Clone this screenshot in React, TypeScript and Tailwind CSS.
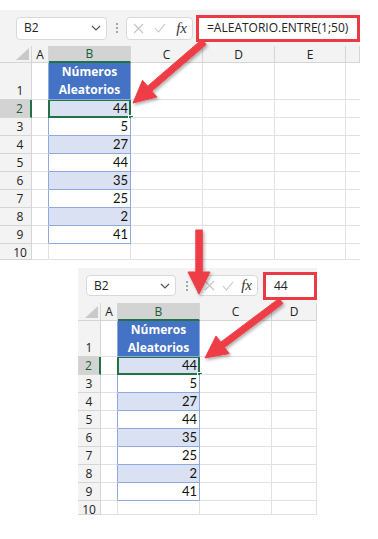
import type { ReactNode } from 'react';

type Col = { label: string; w: number };

type SheetProps = {
  width: number;
  toolbarH: number;
  nameMl: number;
  nameW: number;
  boxH: number;
  dotsW: number;
  iconW: number;
  redGap: number;
  redW: number;
  redH: number;
  formula: string;
  headerH: number;
  row1H: number;
  lastRowH: number;
  rowHeadW: number;
  rowHeadPad: number;
  cols: Col[];
};

const VALUES = [44, 5, 27, 44, 35, 25, 2, 41];

const TOP: SheetProps = {
  width: 360,
  toolbarH: 36,
  nameMl: 16,
  nameW: 91,
  boxH: 23,
  dotsW: 19,
  iconW: 67,
  redGap: 3,
  redW: 164,
  redH: 27,
  formula: '=ALEATORIO.ENTRE(1;50)',
  headerH: 17,
  row1H: 37,
  lastRowH: 16,
  rowHeadW: 32,
  rowHeadPad: 9,
  cols: [
    { label: 'A', w: 17 },
    { label: 'B', w: 82 },
    { label: 'C', w: 72 },
    { label: 'D', w: 72 },
    { label: 'E', w: 71 },
    { label: '', w: 14 },
  ],
};

const BOTTOM: SheetProps = {
  width: 239,
  toolbarH: 35,
  nameMl: 8,
  nameW: 90,
  boxH: 21,
  dotsW: 21,
  iconW: 61,
  redGap: 5,
  redW: 54,
  redH: 28,
  formula: '44',
  headerH: 18,
  row1H: 36,
  lastRowH: 14,
  rowHeadW: 23,
  rowHeadPad: 0,
  cols: [
    { label: 'A', w: 17 },
    { label: 'B', w: 82 },
    { label: 'C', w: 72 },
    { label: 'D', w: 45 },
  ],
};

function Dots() {
  return (
    <div className="flex flex-col gap-[2px]">
      <span className="h-[2px] w-[2px] rounded-full bg-[#8a8a8a]" />
      <span className="h-[2px] w-[2px] rounded-full bg-[#8a8a8a]" />
      <span className="h-[2px] w-[2px] rounded-full bg-[#8a8a8a]" />
    </div>
  );
}

function Toolbar(p: SheetProps) {
  return (
    <div
      className="flex items-center bg-[#f3f3f3]"
      style={{ height: p.toolbarH }}
    >
      <div
        className="flex shrink-0 items-center justify-between rounded-[4px] border border-[#d9d9d9] bg-white pl-[7px] pr-[5px] text-[12px] leading-[16px] text-[#222]"
        style={{ marginLeft: p.nameMl, width: p.nameW, height: p.boxH }}
      >
        <span>B2</span>
        <svg width="10" height="6" viewBox="0 0 10 6">
          <path d="M1 1 L5 5 L9 1" fill="none" stroke="#555" strokeWidth="1.2" />
        </svg>
      </div>
      <div className="flex shrink-0 justify-center" style={{ width: p.dotsW }}>
        <Dots />
      </div>
      <div
        className="flex shrink-0 items-center justify-between rounded-[4px] border border-[#d9d9d9] bg-white pl-[6px] pr-[5px]"
        style={{ width: p.iconW, height: p.boxH }}
      >
        <svg width="11" height="11" viewBox="0 0 11 11">
          <path d="M1 1 L10 10 M10 1 L1 10" stroke="#c4c4c4" strokeWidth="1.1" />
        </svg>
        <svg width="12" height="10" viewBox="0 0 12 10">
          <path d="M1 5 L4.5 9 L11 1" fill="none" stroke="#c4c4c4" strokeWidth="1.1" />
        </svg>
        <span className="font-['Liberation_Serif',serif] text-[15px] italic leading-none text-[#333]">
          fx
        </span>
      </div>
      <div
        className="flex shrink-0 items-center border-[3px] border-[#ec3a44] bg-white pl-[8px] text-[12px] leading-[16px] text-[#222]"
        style={{ marginLeft: p.redGap, width: p.redW, height: p.redH }}
      >
        {p.formula}
      </div>
    </div>
  );
}

function HeaderRow(p: SheetProps) {
  return (
    <div className="flex bg-[#f3f3f3]" style={{ height: p.headerH }}>
      <div
        className="relative shrink-0 border-b border-r border-[#d5d5d5]"
        style={{ width: p.rowHeadW }}
      >
        <svg
          className="absolute bottom-[2px] right-[2px]"
          width="13"
          height="12"
          viewBox="0 0 13 12"
        >
          <path d="M13 0 L13 12 L0 12 Z" fill="#c9c9c9" />
        </svg>
      </div>
      {p.cols.map((c) => {
        const sel = c.label === 'B';
        return (
          <div
            key={c.label + c.w}
            className={`flex shrink-0 items-center justify-center border-r text-[12px] leading-[15px] ${
              sel
                ? 'border-b-2 border-r-[#d5d5d5] border-b-[#217346] bg-[#d3d3d3] text-[#185c37]'
                : 'border-b border-[#d5d5d5] text-[#222]'
            }`}
            style={{ width: c.w }}
          >
            {c.label}
          </div>
        );
      })}
    </div>
  );
}

function Cell({
  w,
  className,
  children,
}: {
  w: number;
  className: string;
  children?: ReactNode;
}) {
  return (
    <div className={`relative shrink-0 ${className}`} style={{ width: w }}>
      {children}
    </div>
  );
}

function Grid(p: SheetProps) {
  const rows = Array.from({ length: 10 }, (_, i) => i + 1);
  return (
    <div className="font-['Open_Sans',sans-serif]">
      {rows.map((r) => {
        const last = r === 10;
        const h = r === 1 ? p.row1H : last ? p.lastRowH : 18;
        const inTable = r <= 9;
        const selRow = r === 2;
        return (
          <div key={r} className="flex overflow-hidden" style={{ height: h }}>
            <div
              className={`flex shrink-0 justify-center text-[12px] leading-[15px] ${
                last ? 'items-start pt-[1px]' : 'items-end pb-[1px]'
              } ${
                selRow
                  ? 'border-r-2 border-b border-r-[#217346] border-b-[#d5d5d5] bg-[#d3d3d3] text-[#185c37]'
                  : 'border-b border-r border-[#d5d5d5] bg-[#f3f3f3] text-[#222]'
              }`}
              style={{ width: p.rowHeadW, paddingLeft: p.rowHeadPad }}
            >
              {r}
            </div>
            {p.cols.map((c) => {
              if (c.label === 'A') {
                return (
                  <Cell
                    key="A"
                    w={c.w}
                    className={`border-b border-r border-b-[#e1e1e1] ${
                      inTable ? 'border-r-[#8ea9db]' : 'border-r-[#e1e1e1]'
                    }`}
                  />
                );
              }
              if (c.label === 'B') {
                if (r === 1) {
                  return (
                    <Cell
                      key="B"
                      w={c.w}
                      className="flex flex-col items-center justify-center border-b border-r border-[#8ea9db] bg-[#4472c4] text-[12px] font-bold leading-[18px] text-white"
                    >
                      <span>Números</span>
                      <span>Aleatorios</span>
                    </Cell>
                  );
                }
                if (inTable) {
                  const band = r % 2 === 0;
                  return (
                    <Cell
                      key="B"
                      w={c.w}
                      className={`flex items-end justify-end border-b border-r border-[#8ea9db] pb-[1px] pr-[2px] font-['Lato',sans-serif] text-[13px] leading-[15px] text-[#111] ${
                        band ? 'bg-[#d9e1f2]' : 'bg-white'
                      }`}
                    >
                      {VALUES[r - 2]}
                      {selRow ? (
                        <>
                          <div className="pointer-events-none absolute inset-[-1px] border-2 border-[#217346]" />
                          <div className="absolute bottom-[-4px] right-[-4px] h-[6px] w-[6px] border border-white bg-[#217346]" />
                        </>
                      ) : null}
                    </Cell>
                  );
                }
                return (
                  <Cell key="B" w={c.w} className="border-b border-r border-[#e1e1e1]" />
                );
              }
              return (
                <Cell
                  key={c.label + c.w}
                  w={c.w}
                  className={`border-b border-[#e1e1e1] ${c.label ? 'border-r' : ''}`}
                />
              );
            })}
          </div>
        );
      })}
    </div>
  );
}

function Sheet(p: SheetProps) {
  return (
    <div
      className="overflow-hidden font-['Open_Sans',sans-serif]"
      style={{ width: p.width }}
    >
      <Toolbar {...p} />
      <HeaderRow {...p} />
      <Grid {...p} />
    </div>
  );
}

function arrowPoints(x1: number, y1: number, x2: number, y2: number) {
  const sw = 6.5;
  const hl = 22;
  const hw = 11;
  const dx = x2 - x1;
  const dy = y2 - y1;
  const len = Math.hypot(dx, dy);
  const ux = dx / len;
  const uy = dy / len;
  const px = -uy;
  const py = ux;
  const bx = x2 - ux * hl;
  const by = y2 - uy * hl;
  const pts = [
    [x1 + (px * sw) / 2, y1 + (py * sw) / 2],
    [bx + (px * sw) / 2, by + (py * sw) / 2],
    [bx + px * hw, by + py * hw],
    [x2, y2],
    [bx - px * hw, by - py * hw],
    [bx - (px * sw) / 2, by - (py * sw) / 2],
    [x1 - (px * sw) / 2, y1 - (py * sw) / 2],
  ];
  return pts.map(([x, y]) => `${x.toFixed(1)},${y.toFixed(1)}`).join(' ');
}

const ARROWS: [number, number, number, number][] = [
  [204, 42, 133, 103],
  [199, 230, 199, 294],
  [281, 301, 205, 358],
];

export default function App() {
  return (
    <div className="relative h-[539px] w-[378px] overflow-hidden bg-white text-[#222]">
      <div className="pt-[10px]">
        <Sheet {...TOP} />
      </div>
      <div className="ml-[78px] mt-[8px]">
        <Sheet {...BOTTOM} />
      </div>
      <svg
        className="pointer-events-none absolute inset-0"
        width="378"
        height="539"
        viewBox="0 0 378 539"
      >
        <defs>
          <filter id="sh" x="-20%" y="-20%" width="140%" height="140%">
            <feDropShadow dx="1.5" dy="2" stdDeviation="1.5" floodColor="#000" floodOpacity="0.3" />
          </filter>
        </defs>
        {ARROWS.map(([x1, y1, x2, y2], i) => (
          <polygon
            key={i}
            points={arrowPoints(x1, y1, x2, y2)}
            fill="#ef3e46"
            stroke="#ef3e46"
            strokeWidth="1"
            strokeLinejoin="round"
            filter="url(#sh)"
          />
        ))}
      </svg>
    </div>
  );
}
